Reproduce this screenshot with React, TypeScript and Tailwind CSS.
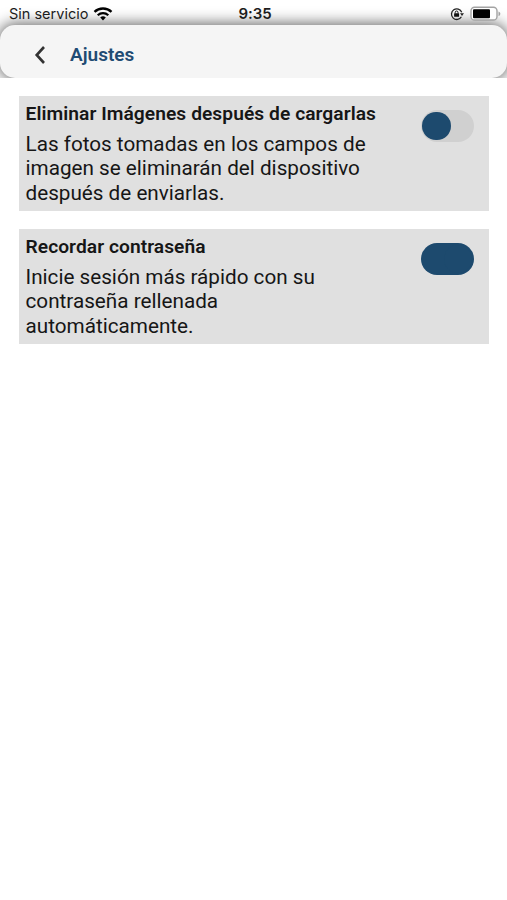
import React from "react";

const StatusBar = () => {
  return (
    <div className="relative z-10 flex h-[25px] items-start text-[#1c1c1c] font-['Inter',sans-serif]">
      <div className="flex flex-1 items-center pl-[9px] pt-[5px]">
        <span className="w-[79px] whitespace-nowrap text-[14.5px] leading-[18px]">
          Sin servicio
        </span>
        <svg className="ml-[5px] h-[14px] w-[20px]" viewBox="0 0 20 14" fill="none">
          <path d="M1.5 4.8a12.4 12.4 0 0 1 17 0" stroke="#000" strokeWidth="2.4" />
          <path d="M4.7 8.2a7.8 7.8 0 0 1 10.6 0" stroke="#000" strokeWidth="2.2" />
          <path d="M10 13.4 7.2 10.6a4 4 0 0 1 5.6 0Z" fill="#000" />
        </svg>
      </div>
      <span className="pt-[5px] text-[15px] font-semibold leading-[18px] tracking-[-0.1px]">
        9:35
      </span>
      <div className="flex flex-1 items-center justify-end pr-[6px] pt-[5px]">
        <svg className="mt-[2px] mr-[6px] h-[14px] w-[14px]" viewBox="0 0 14 14" fill="none">
          <path
            d="M11.4 9.8A5.3 5.3 0 1 1 11.7 5.2"
            stroke="#222"
            strokeWidth="1.3"
          />
          <path d="M10 6.2h4l-2 2.8Z" fill="#222" />
          <rect x="4.1" y="6.2" width="5" height="3.6" rx="0.5" fill="#111" />
          <path d="M5.2 6.4V5.4a1.4 1.4 0 0 1 2.8 0v1" stroke="#111" />
        </svg>
        <svg className="h-[15px] w-[31px]" viewBox="0 0 31 15">
          <rect
            x="1"
            y="1.2"
            width="26"
            height="12.8"
            rx="3.6"
            fill="#fff"
            stroke="#a3a3a3"
            strokeWidth="1.4"
          />
          <rect x="3" y="3.2" width="17" height="9" rx="1" fill="#000" />
          <path d="M28.5 5.4c2.4.8 2.4 3.8 0 4.6Z" fill="#a3a3a3" />
        </svg>
      </div>
    </div>
  );
};

const Header = () => {
  return (
    <div className="h-[53px]">
      <header className="flex h-full items-center rounded-[15px] bg-[#f5f5f5] pl-[34px] pt-[5px] shadow-[0_0_15px_1px_rgba(0,0,0,0.65)]">
        <svg className="mt-px h-[20px] w-[12px]" viewBox="0 0 12 20" fill="none">
          <path d="M10 2 2.7 10l7.3 8" stroke="#333" strokeWidth="2.6" />
        </svg>
        <h1 className="mt-[2px] ml-[24px] text-[19px] font-semibold leading-6 text-[#1f4b73]">
          Ajustes
        </h1>
      </header>
    </div>
  );
};

const Toggle = ({ on }: { on: boolean }) => {
  return (
    <button
      role="switch"
      aria-checked={on}
      className={`mt-[13.5px] mr-[15.5px] flex h-[32.5px] w-[53px] shrink-0 items-center rounded-full px-[1.5px] ${
        on ? "justify-end bg-[#1d4a6e]" : "justify-start bg-[#d0d0d0]"
      }`}
    >
      <span className="h-[28.5px] w-[28.5px] rounded-full bg-[#1d4a6e]" />
    </button>
  );
};

type SettingProps = {
  title: string;
  lines: string[];
  on: boolean;
};

const Setting = ({ title, lines, on }: SettingProps) => {
  return (
    <div className="flex h-[115px] items-start justify-between bg-[#e0e0e0] pl-[6.5px] text-[#161616]">
      <div className="whitespace-nowrap pt-[6px]">
        <h2 className="text-[19.2px] font-semibold leading-[24px] tracking-[0.06px]">
          {title}
        </h2>
        <p className="mt-[6px] text-[20.7px] leading-[24.3px]">
          {lines.map((line) => (
            <span key={line} className="block">
              {line}
            </span>
          ))}
        </p>
      </div>
      <Toggle on={on} />
    </div>
  );
};

const App = () => {
  return (
    <div className="h-[900px] w-[507px] overflow-hidden bg-white font-['Roboto',sans-serif]">
      <StatusBar />
      <Header />
      <main className="relative flex h-[822px] flex-col gap-[18px] bg-white pl-[19px] pr-[18px] pt-[18px]">
        <Setting
          title="Eliminar Imágenes después de cargarlas"
          lines={[
            "Las fotos tomadas en los campos de",
            "imagen se eliminarán del dispositivo",
            "después de enviarlas.",
          ]}
          on={false}
        />
        <Setting
          title="Recordar contraseña"
          lines={[
            "Inicie sesión más rápido con su",
            "contraseña rellenada",
            "automáticamente.",
          ]}
          on={true}
        />
      </main>
    </div>
  );
};

export default App;
